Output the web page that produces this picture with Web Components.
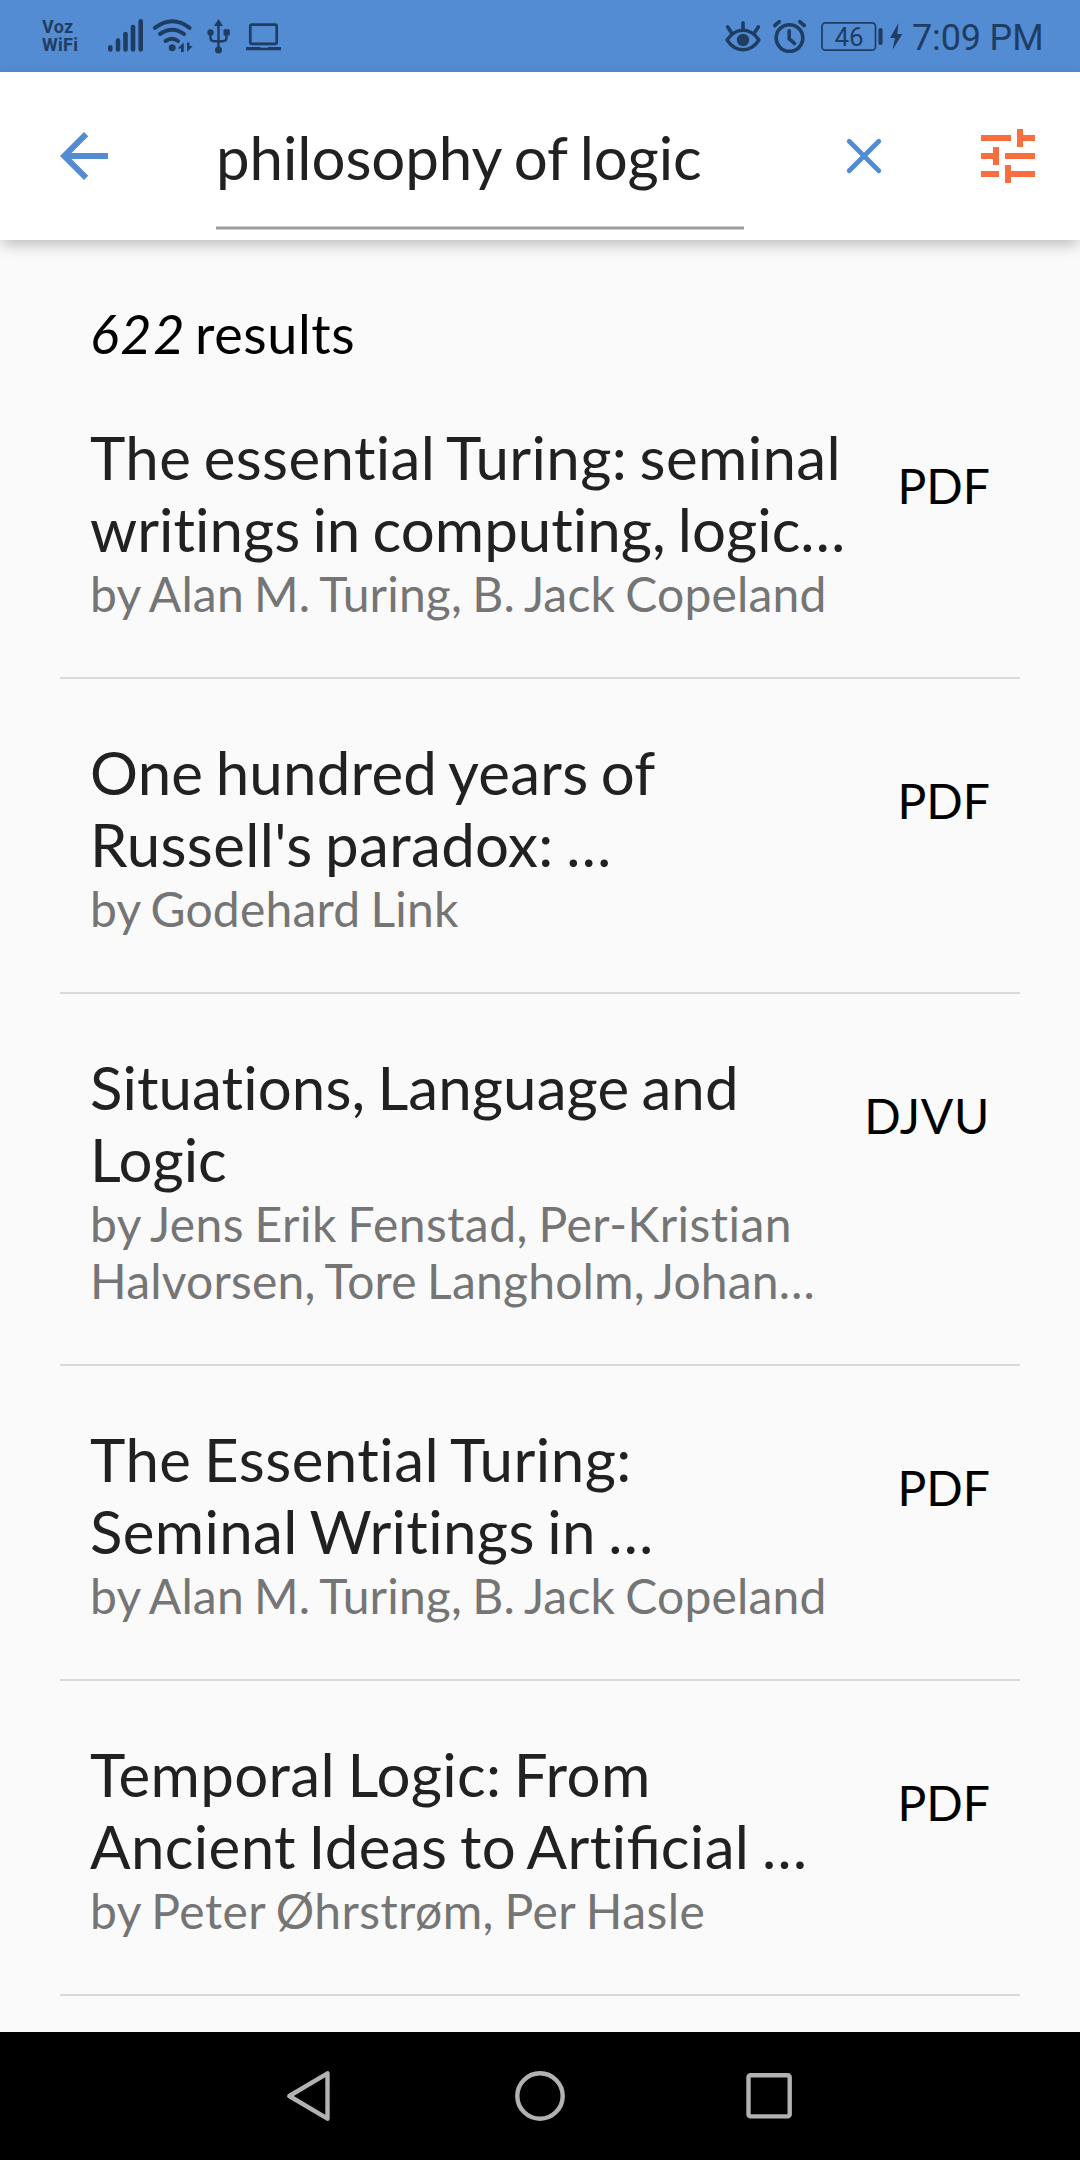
<!DOCTYPE html>
<html lang="en">
<head>
<meta charset="utf-8">
<title>Search</title>
<style>
html,body{margin:0;padding:0}
body{width:1080px;height:2160px;overflow:hidden;background:#fafafa;font-family:Lato,sans-serif}
</style>
</head>
<body>
<library-app></library-app>
<script>
class StatusBar extends HTMLElement{
  constructor(){super();this.attachShadow({mode:'open'}).innerHTML=`
<style>
:host{display:flex;height:72px;background:#538cd3;color:#1f3d63;justify-content:space-between;align-items:flex-start;box-sizing:border-box;flex:none;font-family:Roboto,sans-serif}
.l,.r{display:flex;align-items:flex-start}
.l{padding-left:42px}
.r{padding-right:35px}
svg{display:block;fill:none;stroke:currentColor;flex:none}
.voz{width:60px;padding-top:18px;font:700 18px/18px Roboto,sans-serif;letter-spacing:.3px}
.voz div{white-space:nowrap}
.bat{position:relative}
.num{position:absolute;left:3px;top:22px;width:54px;text-align:center;font:26px/30px Roboto,sans-serif}
.time{font:36px/44px Roboto,sans-serif;letter-spacing:-.15px;margin:16px 0 0 1px;width:133px;white-space:nowrap}
</style>
<div class="l">
 <div class="voz"><div>Voz</div><div>WiFi</div></div>
 <svg width="190" height="72" viewBox="102 0 190 72">
  <g stroke-width="4.600" stroke-linecap="round"><path d="M110.300 47.200v2.300M118 40.500v9M125.500 34v15.500M133 27v22.500M140.700 21.300v28.200"/></g>
  <g stroke-width="4" stroke-linecap="round"><path d="M154.800 27.800Q172.500 14.700 189.600 27.800M160 34Q172.500 25.500 184 34M165.600 41Q172 36.500 178 41"/></g>
  <circle cx="172.200" cy="47.800" r="3.500" fill="currentColor" stroke="none"/>
  <path d="M183.800 42.500V52h-2.800v-3.600h-3.500zM187 42.500h2.500V46h3.200L187.200 52z" fill="currentColor" stroke="none"/>
  <g stroke-width="2.400"><path d="M218.500 24v25M210.500 34v3.500q0 3.700 3.700 3.700h8.600q3.700 0 3.700-3.700V34"/></g>
  <g fill="currentColor" stroke="none"><path d="M218.500 19l4.500 7h-9z"/><circle cx="210.500" cy="32.500" r="3.200"/><rect x="223.500" y="29.300" width="6.300" height="6.300" rx="1"/><circle cx="218.500" cy="50" r="3.500"/></g>
  <rect x="250.300" y="24.600" width="26.400" height="19.200" rx="1.500" stroke-width="2.700"/>
  <path d="M246 47h14l1 .8h6.500l1-.8H281v3.200h-35z" fill="currentColor" stroke="none"/>
 </svg>
</div>
<div class="r">
 <svg width="95" height="72" viewBox="724 0 95 72">
  <path d="M727 40q6.500-9.800 16-9.800T759 40q-6.500 9.700-16 9.700T727 40z" stroke-width="3.400" stroke-linejoin="round"/>
  <circle cx="743" cy="40" r="6.200" fill="currentColor" stroke="none"/>
  <path d="M743 22.800v7M727.700 27l3.300 5M758.300 27l-3.300 5" stroke-width="3.600" stroke-linecap="round"/>
  <circle cx="789.500" cy="38" r="13.300" stroke-width="3.600"/>
  <path d="M789.200 30.800v8l5.300 4.500M774.800 25.500l4.500-3.800M804.200 25.500l-4.500-3.800" stroke-width="3.600" stroke-linecap="round"/>
 </svg>
 <div class="bat">
  <svg width="92" height="72" viewBox="819 0 92 72">
   <rect x="822" y="22.800" width="53.500" height="27.400" rx="3.500" stroke-width="1.700"/>
   <path d="M880.500 30v13" stroke-width="4.200" stroke-linecap="round"/>
   <path d="M898.500 23L890 38h5l-2.500 12 9.800-16h-5z" fill="currentColor" stroke="none"/>
  </svg>
  <div class="num">46</div>
 </div>
 <div class="time">7:09 PM</div>
</div>`}
}
customElements.define('status-bar',StatusBar);

class SearchBar extends HTMLElement{
  constructor(){super();this.attachShadow({mode:'open'}).innerHTML=`
<style>
:host{display:flex;height:168px;background:#fff;position:relative;z-index:1;flex:none;align-items:flex-start;padding:0 36px 0 48px;box-sizing:border-box;box-shadow:0 5px 14px -2px rgba(0,0,0,.2),0 8px 16px -1px rgba(0,0,0,.08)}
svg{display:block;flex:none;margin-top:48px}
.field{margin-left:96px;width:528px;height:158px;box-sizing:border-box;padding-top:49px;font-size:60px;line-height:72px;letter-spacing:-.06px;word-spacing:-.042em;color:#212121;white-space:nowrap;display:flex;flex-direction:column;justify-content:space-between}
.line{height:2px;background:#9b9b9b;border:solid #cdcdcd;border-width:1px 0}
.clear{margin-left:84px}
.tune{margin-left:72px}
</style>
<svg width="72" height="72" viewBox="0 0 24 24" fill="#538cd3"><path d="M20 11H7.830l5.590-5.590L12 4l-8 8 8 8 1.410-1.410L7.830 13H20v-2z"/></svg>
<div class="field"><slot></slot><div class="line"></div></div>
<svg class="clear" width="72" height="72" viewBox="0 0 72 72" stroke="#538cd3" stroke-width="4.800" stroke-linecap="round"><path d="M21.200 21.200l29.600 29.600M50.800 21.200l-29.600 29.600"/></svg>
<svg class="tune" width="72" height="72" viewBox="0 0 24 24" fill="#fa6d3f"><path d="M3 17v2h6v-2H3zM3 5v2h10V5H3zm10 16v-2h8v-2h-8v-2h-2v6h2zM7 9v2H3v2h4v2h2V9H7zm14 4v-2H11v2h10zm-6-4h2V7h4V5h-4V3h-2v6z"/></svg>`}
}
customElements.define('search-bar',SearchBar);

class TextLine extends HTMLElement{
  constructor(){super();this.attachShadow({mode:'open'}).innerHTML=`
<style>
:host{display:block;white-space:nowrap;font-variant-ligatures:none;word-spacing:-.054em}
:host([slot="authors"]){word-spacing:-.045em}
</style><slot></slot>`}
  connectedCallback(){const t=this.getAttribute('tracking');if(t)this.style.letterSpacing=t+'px'}
}
customElements.define('text-line',TextLine);

class BookItem extends HTMLElement{
  constructor(){super();this.attachShadow({mode:'open'}).innerHTML=`
<style>
:host{display:flex;justify-content:space-between;align-items:flex-start;margin:0 60px;padding:57px 30px 55px;border-bottom:2px solid #dadada}
.title{font-size:60px;line-height:72px;color:#212121}
.by{font-size:48px;line-height:57px;color:#757575}
.fmt{font-size:48px;line-height:58px;color:#000;margin-top:36px}
</style>
<div class="text"><div class="title"><slot name="title"></slot></div><div class="by"><slot name="authors"></slot></div></div>
<div class="fmt"><slot name="format"></slot></div>`}
}
customElements.define('book-item',BookItem);

class NavBar extends HTMLElement{
  constructor(){super();this.attachShadow({mode:'open'}).innerHTML=`
<style>
:host{display:flex;height:128px;background:#000;align-items:center;justify-content:center;gap:165px;flex:none}
svg{display:block;fill:none;stroke:#b2b2b2;stroke-width:4.400;stroke-linejoin:round}
</style>
<svg width="64" height="64" viewBox="279 2064 64 64"><path d="M289.300 2096L327.500 2073.300V2118.700z"/></svg>
<svg width="64" height="64"><circle cx="32" cy="32" r="22.700"/></svg>
<svg width="64" height="64"><rect x="11.500" y="11.200" width="41.200" height="41.200" rx="2"/></svg>`}
}
customElements.define('nav-bar',NavBar);

class LibraryApp extends HTMLElement{
  constructor(){super();this.attachShadow({mode:'open'}).innerHTML=`
<style>
:host{display:flex;flex-direction:column;height:2160px;width:1080px;font-family:Lato,sans-serif}
main{flex:1;overflow:hidden;min-height:0}
.count{font-size:54px;line-height:65px;letter-spacing:.6px;word-spacing:-5.300px;color:#000;padding:61px 90px 0;height:63px}
.count i{letter-spacing:1.500px}
.lig{letter-spacing:0;font-variant-ligatures:common-ligatures}
</style>
<status-bar></status-bar>
<search-bar>philosophy of logic</search-bar>
<main>
<div class="count"><i>622</i> results</div>
<book-item>
<text-line slot="title" tracking=".37">The essential Turing: seminal</text-line>
<text-line slot="title" tracking=".04">writings in computing, logic…</text-line>
<text-line slot="authors" tracking=".16">by Alan M. Turing, B. Jack Copeland</text-line>
<text-line slot="format">PDF</text-line>
</book-item>
<book-item>
<text-line slot="title" tracking=".23">One hundred years of</text-line>
<text-line slot="title" tracking=".35">Russell's paradox: …</text-line>
<text-line slot="authors" tracking=".18">by Godehard Link</text-line>
<text-line slot="format">PDF</text-line>
</book-item>
<book-item>
<text-line slot="title" tracking=".1">Situations, Language and</text-line>
<text-line slot="title">Logic</text-line>
<text-line slot="authors" tracking=".45">by Jens Erik Fenstad, Per-Kristian</text-line>
<text-line slot="authors" tracking=".2">Halvorsen, Tore Langholm, Johan…</text-line>
<text-line slot="format" tracking=".75">DJVU</text-line>
</book-item>
<book-item>
<text-line slot="title" tracking=".475">The Essential Turing:</text-line>
<text-line slot="title" tracking=".36">Seminal Writings in …</text-line>
<text-line slot="authors" tracking=".16">by Alan M. Turing, B. Jack Copeland</text-line>
<text-line slot="format">PDF</text-line>
</book-item>
<book-item>
<text-line slot="title" tracking=".36">Temporal Logic: From</text-line>
<text-line slot="title" tracking=".39">Ancient Ideas to Arti<span class="lig">fi</span>cial …</text-line>
<text-line slot="authors" tracking=".45">by Peter Øhrstrøm, Per Hasle</text-line>
<text-line slot="format">PDF</text-line>
</book-item>
</main>
<nav-bar></nav-bar>`}
}
customElements.define('library-app',LibraryApp);
</script>
</body>
</html>
